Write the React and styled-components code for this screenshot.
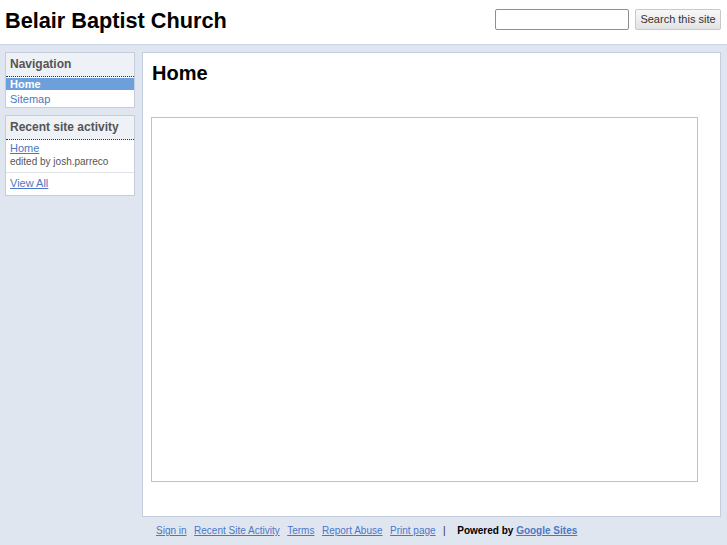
import React from 'react';
import styled, { createGlobalStyle } from 'styled-components';

const GlobalStyle = createGlobalStyle`
  html, body {
    margin: 0;
    padding: 0;
    background: #e0e6f0;
    font-family: "Liberation Sans", Arial, sans-serif;
  }
  * { box-sizing: border-box; }
`;

const Header = styled.header`
  display: flex;
  align-items: center;
  justify-content: space-between;
  height: 45px;
  padding: 0 6px 0 5px;
  background: #fff;
  border-bottom: 1px solid #c9d3e3;
`;

const SiteTitle = styled.h1`
  margin: 0;
  font-size: 21.7px;
  font-weight: bold;
  color: #000;
  position: relative;
  top: -1px;
`;

const SearchForm = styled.form`
  display: flex;
  align-items: center;
  gap: 6px;
  position: relative;
  top: -3px;
`;

const SearchInput = styled.input`
  width: 134px;
  height: 21px;
  padding: 1px;
  border: 1px solid #8f8f8f;
  border-radius: 2px;
  font-size: 11px;
`;

const SearchButton = styled.button`
  height: 21px;
  padding: 0 4px;
  width: 86px;
  font-family: "Liberation Sans", Arial, sans-serif;
  font-size: 11px;
  color: #333;
  background: linear-gradient(#f8f8f8, #e3e3e3);
  border: 1px solid #c8c8c8;
  border-radius: 2px;
`;

const Body = styled.div`
  display: flex;
  align-items: flex-start;
  gap: 7px;
  padding: 7px 6px 0 5px;
`;

const Sidebar = styled.aside`
  width: 130px;
  flex: none;
  display: flex;
  flex-direction: column;
  gap: 7px;
`;

const Box = styled.div`
  background: #fff;
  border: 1px solid #c3cddd;
  font-size: 11px;
`;

const BoxTitle = styled.div`
  background: #eef1f6;
  padding: 4px 4px 5px;
  font-size: 12px;
  line-height: 14px;
  font-weight: bold;
  color: #555;
  border-bottom: 1px dotted #333;
`;

const NavItem = styled.a`
  display: block;
  padding: ${p => (p.active ? '0 4px' : '3px 4px 2px')};
  font-size: 11px;
  line-height: 12px;
  text-decoration: none;
  color: ${p => (p.active ? '#fff' : '#4b77c5')};
  background: ${p => (p.active ? '#6c9fdc' : 'transparent')};
  font-weight: ${p => (p.active ? 'bold' : 'normal')};
  margin-top: ${p => (p.active ? '1px' : '0')};
`;

const ActivityEntry = styled.div`
  padding: ${p => (p.last ? '4px 4px 5px' : '2px 4px 4px')};
  border-bottom: ${p => (p.last ? 'none' : '1px solid #dfe4ec')};
  font-size: 11px;
  line-height: 13px;
`;

const Link = styled.a`
  font-size: 11px;
  color: #4b77c5;
  text-decoration: underline;
`;

const Meta = styled.div`
  font-size: 10px;
  line-height: 12px;
  color: #555;
  margin-top: 1px;
`;

const Main = styled.main`
  flex: 1;
  height: 465px;
  background: #fff;
  border: 1px solid #c3cddd;
  padding: 9px 22px 0 8px;
`;

const PageTitle = styled.h2`
  margin: 0 0 0 1px;
  font-size: 20px;
  font-weight: bold;
  color: #000;
`;

const Frame = styled.div`
  margin-top: 32px;
  height: 365px;
  border: 1px solid #b9c3d3;
`;

const Footer = styled.footer`
  display: flex;
  align-items: center;
  gap: 7.5px;
  padding: 8px 0 0 156px;
  font-size: 10px;
`;

const FooterLink = styled.a`
  color: #4b77c5;
  text-decoration: underline;
  font-weight: ${p => (p.strong ? 'bold' : 'normal')};
`;

const Sep = styled.span`
  color: #333;
  margin-right: 4px;
`;

const Powered = styled.span`
  color: #000;
  font-weight: bold;
`;

export default function App() {
  return (
    <>
      <GlobalStyle />
      <Header>
        <SiteTitle>Belair Baptist Church</SiteTitle>
        <SearchForm onSubmit={e => e.preventDefault()}>
          <SearchInput type="text" />
          <SearchButton type="submit">Search this site</SearchButton>
        </SearchForm>
      </Header>
      <Body>
        <Sidebar>
          <Box>
            <BoxTitle>Navigation</BoxTitle>
            <NavItem active href="#">Home</NavItem>
            <NavItem href="#">Sitemap</NavItem>
          </Box>
          <Box>
            <BoxTitle>Recent site activity</BoxTitle>
            <ActivityEntry>
              <Link href="#">Home</Link>
              <Meta>edited by josh.parreco</Meta>
            </ActivityEntry>
            <ActivityEntry last>
              <Link href="#">View All</Link>
            </ActivityEntry>
          </Box>
        </Sidebar>
        <Main>
          <PageTitle>Home</PageTitle>
          <Frame />
        </Main>
      </Body>
      <Footer>
        <FooterLink href="#">Sign in</FooterLink>
        <FooterLink href="#">Recent Site Activity</FooterLink>
        <FooterLink href="#">Terms</FooterLink>
        <FooterLink href="#">Report Abuse</FooterLink>
        <FooterLink href="#">Print page</FooterLink>
        <Sep>|</Sep>
        <Powered>
          Powered by <FooterLink strong href="#">Google Sites</FooterLink>
        </Powered>
      </Footer>
    </>
  );
}
